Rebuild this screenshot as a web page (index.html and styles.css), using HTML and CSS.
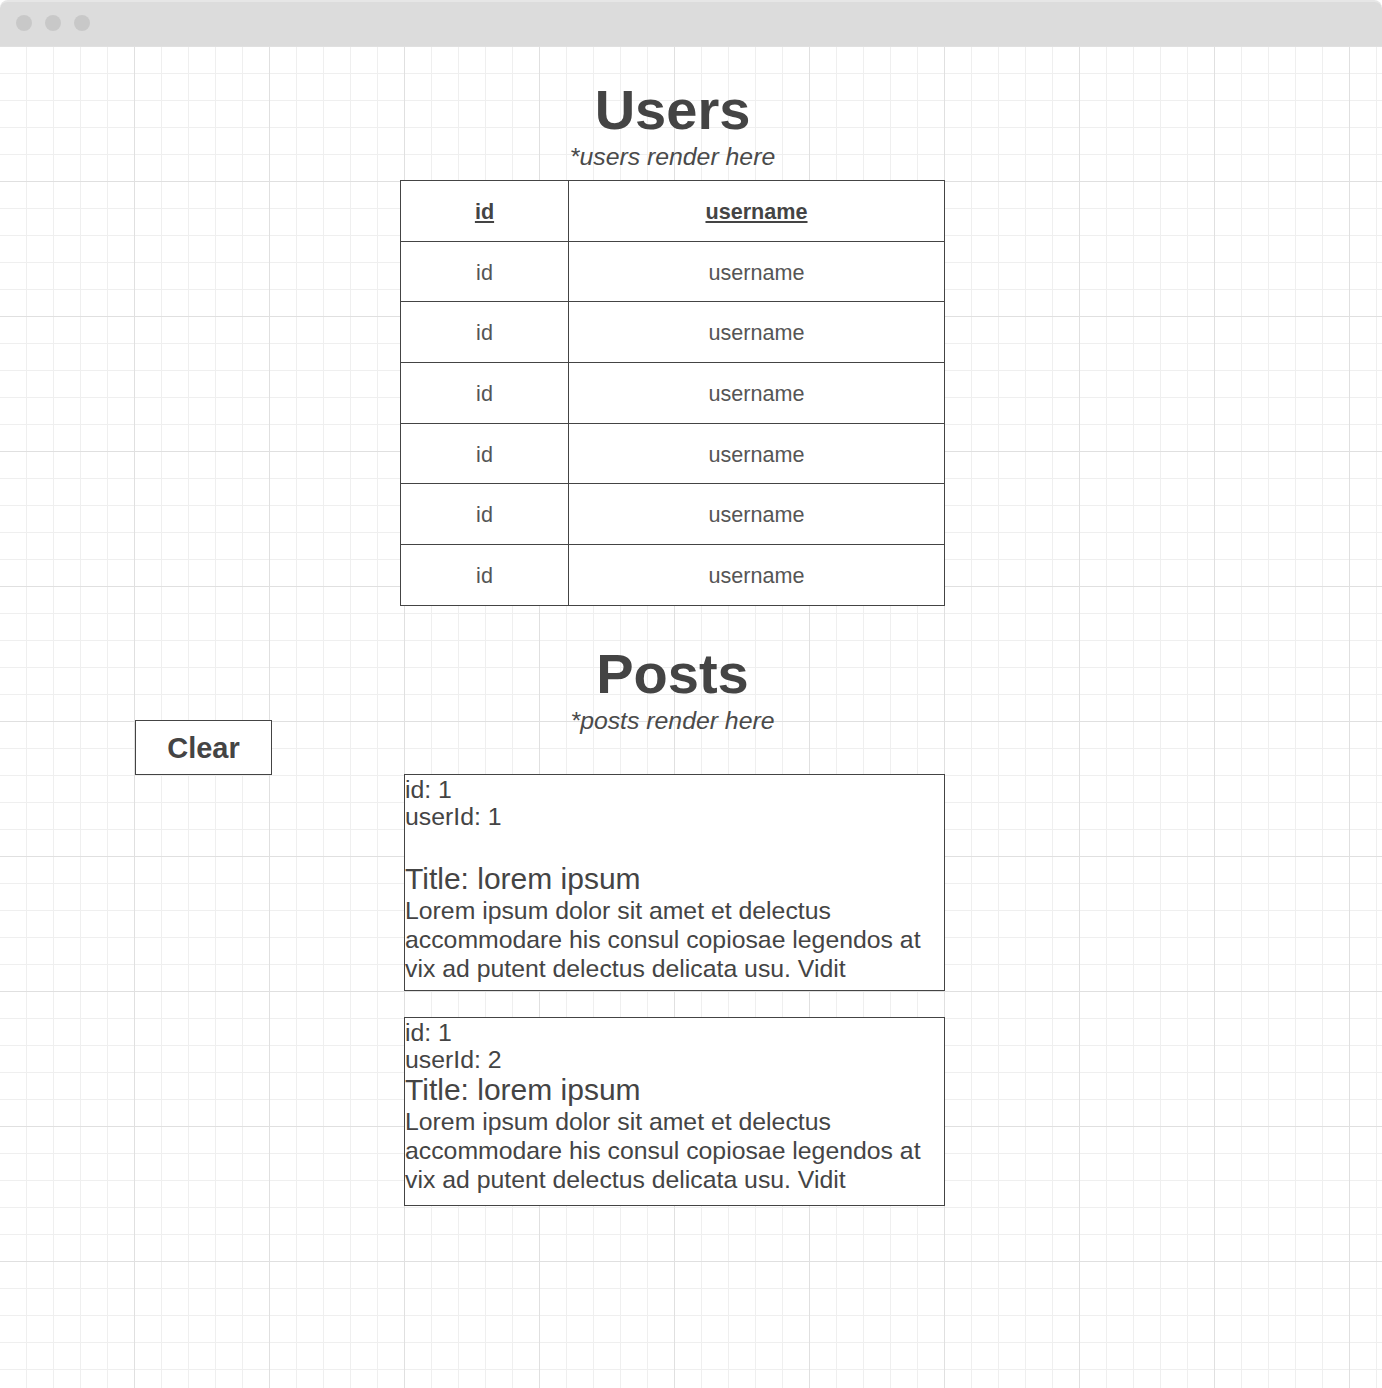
FILE: index.html
```html
<!DOCTYPE html>
<html lang="en">
<head>
<meta charset="utf-8">
<title>Users and Posts</title>
<link rel="stylesheet" href="styles.css">
</head>
<body>
<div class="window">
  <div class="titlebar">
    <span class="dot"></span>
    <span class="dot"></span>
    <span class="dot"></span>
  </div>
  <div class="canvas">
    <section class="users">
      <h1 class="heading">Users</h1>
      <p class="subtitle">*users render here</p>
      <table class="users-table">
        <thead>
          <tr><th class="col-id">id</th><th>username</th></tr>
        </thead>
        <tbody>
          <tr><td>id</td><td>username</td></tr>
          <tr><td>id</td><td>username</td></tr>
          <tr><td>id</td><td>username</td></tr>
          <tr><td>id</td><td>username</td></tr>
          <tr><td>id</td><td>username</td></tr>
          <tr><td>id</td><td>username</td></tr>
        </tbody>
      </table>
    </section>
    <aside class="side">
      <button class="clear-btn" type="button">Clear</button>
    </aside>
    <section class="posts">
      <h1 class="heading">Posts</h1>
      <p class="subtitle">*posts render here</p>
      <div class="post-list">
        <article class="post post--first">
          <div class="post-meta">id: 1</div>
          <div class="post-meta">userId: 1</div>
          <div class="post-title post-title--spaced">Title: lorem ipsum</div>
          <div class="post-body">Lorem ipsum dolor sit amet et delectus accommodare his consul copiosae legendos at vix ad putent delectus delicata usu. Vidit</div>
        </article>
        <article class="post post--second">
          <div class="post-meta">id: 1</div>
          <div class="post-meta">userId: 2</div>
          <div class="post-title">Title: lorem ipsum</div>
          <div class="post-body">Lorem ipsum dolor sit amet et delectus accommodare his consul copiosae legendos at vix ad putent delectus delicata usu. Vidit</div>
        </article>
      </div>
    </section>
  </div>
</div>
</body>
</html>
```
FILE: styles.css
```css
* { box-sizing: border-box; }

html, body {
  margin: 0;
  padding: 0;
  background: #ffffff;
}

body {
  font-family: "Liberation Sans", Arial, sans-serif;
  color: #444444;
}

.window {
  width: 1382px;
  min-height: 1388px;
}

.titlebar {
  height: 46px;
  background: #dcdcdc;
  border-top: 2px solid #e6e6e6;
  border-radius: 8px 8px 0 0;
  display: flex;
  align-items: center;
  gap: 13px;
  padding-left: 16px;
  padding-bottom: 2px;
}

.dot {
  width: 16px;
  height: 16px;
  border-radius: 50%;
  background: #c8c8c8;
}

.canvas {
  min-height: 1342px;
  background-color: #ffffff;
  background-image:
    linear-gradient(to right, #e0e0e0 1px, transparent 1px),
    linear-gradient(to bottom, #e0e0e0 1px, transparent 1px),
    linear-gradient(to right, #efefef 1px, transparent 1px),
    linear-gradient(to bottom, #efefef 1px, transparent 1px);
  background-size: 135px 135px, 135px 135px, 27px 27px, 27px 27px;
  background-position: -1px 0, -1px 0, -1px 0, -1px 0;
  display: grid;
  grid-template-columns: 135px 265px 545px;
  grid-template-rows: auto auto;
  align-content: start;
}

.users {
  grid-column: 3;
  grid-row: 1;
  padding-top: 33px;
}

.side {
  grid-column: 2;
  grid-row: 2;
  padding-top: 114px;
}

.posts {
  grid-column: 3;
  grid-row: 2;
  padding-top: 37px;
}

.heading {
  margin: 0;
  text-align: center;
  font-size: 56px;
  line-height: 61px;
  font-weight: 700;
  color: #444444;
}

.subtitle {
  margin: 3px 0 0 0;
  text-align: center;
  font-size: 24.8px;
  line-height: 28px;
  font-style: italic;
  color: #4a4a4a;
}

.users-table {
  margin-top: 9px;
  width: 545px;
  border-collapse: collapse;
  background: #ffffff;
  font-size: 21.6px;
  table-layout: fixed;
}

.users-table th,
.users-table td {
  border: 1px solid #444444;
  text-align: center;
  vertical-align: middle;
  padding: 2px 0 0 0;
  height: 60.7px;
  background: #ffffff;
}

.users-table th {
  font-weight: 700;
  color: #444444;
  text-decoration: underline;
  text-decoration-thickness: 2px;
  text-underline-offset: 2px;
}

.users-table td {
  color: #555555;
  font-weight: 400;
}

.col-id { width: 168px; }

.clear-btn {
  width: 137px;
  height: 55px;
  padding: 2px 0 0 0;
  margin: 0;
  border: 1px solid #444444;
  background: #ffffff;
  font-family: "Liberation Sans", Arial, sans-serif;
  font-size: 29px;
  font-weight: 700;
  line-height: 33px;
  color: #444444;
  display: flex;
  align-items: center;
  justify-content: center;
}

.post-list {
  margin-top: 39px;
  margin-left: 4px;
  display: flex;
  flex-direction: column;
  gap: 26px;
}

.post {
  width: 541px;
  border: 1px solid #444444;
  background: #ffffff;
  overflow: hidden;
  padding-top: 1px;
  font-size: 24.8px;
  color: #444444;
}

.post--first { height: 217px; }
.post--second { height: 189px; }

.post-meta {
  line-height: 27px;
}

.post-title {
  font-size: 30px;
  line-height: 34.5px;
}

.post-title--spaced {
  margin-top: 32px;
}

.post-body {
  line-height: 29px;
}
```
